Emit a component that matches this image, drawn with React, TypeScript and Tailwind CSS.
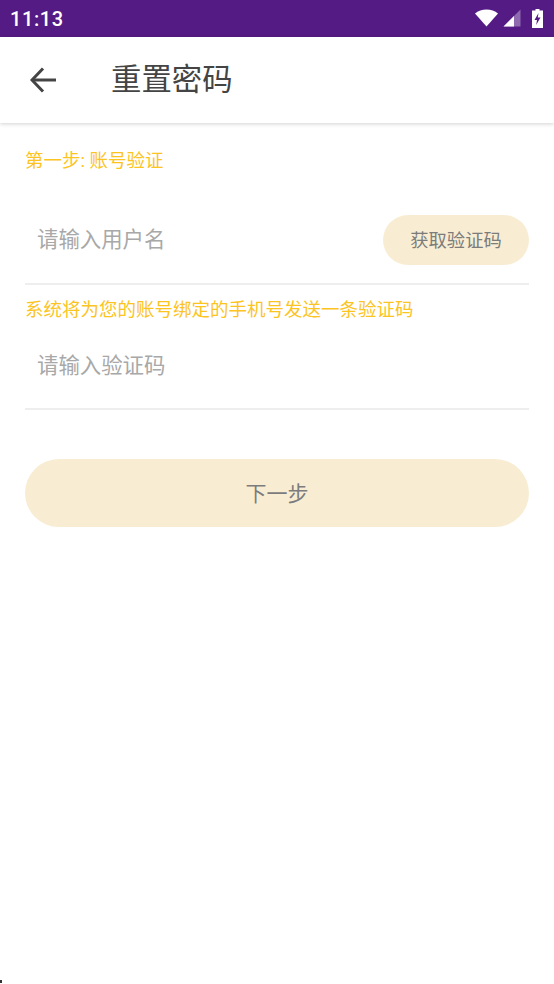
const cjk = "font-['Roboto','Noto_Sans_CJK_SC',sans-serif]"

function StatusIcons() {
  return (
    <div className="mb-[1px] flex items-center">
      <svg width="23" height="18" viewBox="0 0 23 18" className="mr-[5px]">
        <path d="M0 4.5 C6 -1 17 -1 23 4.5 L11.5 17.5 Z" fill="#ffffff" />
      </svg>
      <svg width="18" height="18" viewBox="0 0 18 18" className="mr-[11px]">
        <path d="M17.5 0.5 V17.5 H0.5 Z" fill="#ffffff" fillOpacity="0.35" />
        <path d="M11 7 V17.5 H0.5 Z" fill="#ffffff" />
      </svg>
      <svg width="11" height="19" viewBox="0 0 11 19">
        <path d="M3.5 0 H7.5 V1.5 H11 V19 H0 V1.5 H3.5 Z" fill="#ffffff" />
        <path d="M6.5 4 L2.5 11 H5 L4.2 16 L8.5 8.5 H5.8 Z" fill="#541b84" />
      </svg>
    </div>
  )
}

export default function App() {
  return (
    <div className={`relative flex h-[984px] w-[554px] flex-col overflow-hidden bg-white ${cjk}`}>
      {/* Status bar */}
      <div className="flex h-[37px] flex-shrink-0 items-center justify-between bg-[#541b84] pl-[10px] pr-[11px]">
        <span className="text-[20px] font-medium tracking-[0.6px] text-white">11:13</span>
        <StatusIcons />
      </div>

      {/* Header */}
      <div className="z-10 flex h-[86px] flex-shrink-0 items-center bg-white pl-[30px] shadow-[0_1px_4px_rgba(0,0,0,0.18)]">
        <svg width="26" height="26" viewBox="0 0 26 26" fill="none" stroke="#444444" strokeWidth="3">
          <path d="M26 13 H2" />
          <path d="M13 1.5 L2 13 L13 24.5" />
        </svg>
        <h1 className="ml-[55px] text-[30.4px] font-normal leading-none text-[#444444]">重置密码</h1>
      </div>

      {/* Form */}
      <div className="flex flex-col px-[25px]">
        <p className="mt-[26px] text-[18.5px] leading-[24px] text-[#fcc41f]">第一步: 账号验证</p>

        <div className="mt-[42px] flex items-center justify-between border-b-2 border-[#eeeeee] pb-[18px]">
          <span className="pl-[12px] pt-[1px] text-[21.4px] text-[#a8a8a8]">请输入用户名</span>
          <button className="flex h-[50px] w-[146px] items-center justify-center rounded-full bg-[#f8edd3] pt-[2px] text-[18.3px] text-[#7c7c7c]">
            获取验证码
          </button>
        </div>

        <p className="mt-[13px] text-[18.5px] leading-[24px] text-[#fcc41f]">系统将为您的账号绑定的手机号发送一条验证码</p>

        <div className="flex h-[88px] items-center border-b-2 border-[#eeeeee] pt-[3px]">
          <span className="pl-[12px] text-[21.4px] text-[#a8a8a8]">请输入验证码</span>
        </div>

        <button className="mt-[49px] flex h-[68px] items-center justify-center rounded-full bg-[#f8edd3] pt-[3px] text-[21px] text-[#7c7c7c]">
          下一步
        </button>
      </div>

      {/* corner speck */}
      <div className="absolute bottom-[1px] left-0 h-[3px] w-[2px] bg-[#333333]" />
    </div>
  )
}
